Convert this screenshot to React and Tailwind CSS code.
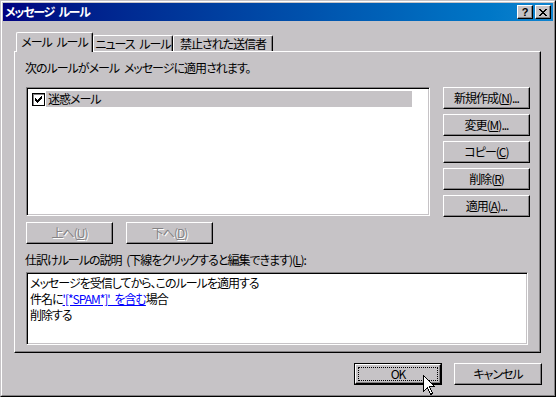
const raised =
  "flex items-center justify-center border border-t-white border-l-white border-r-black border-b-black shadow-[inset_-1px_-1px_0_#848284]";
const sunken =
  "border border-t-[#848284] border-l-[#848284] border-r-white border-b-white shadow-[inset_1px_1px_0_#000,inset_-1px_-1px_0_#c6c3c6]";

function Btn({ children, className = "", disabled }) {
  return (
    <div
      className={
        raised +
        " h-[22px] w-[87px] whitespace-nowrap " +
        (disabled ? "text-[#848284] [text-shadow:1px_1px_0_#fff] " : "") +
        className
      }
    >
      {children}
    </div>
  );
}

function Tab({ children, active, className = "" }) {
  return (
    <div
      className={
        "flex items-start justify-center whitespace-nowrap rounded-t-[2px] border-l border-t border-r border-t-white border-l-white border-r-black bg-[#c6c3c6] shadow-[inset_-1px_0_0_#848284] " +
        (active ? "relative z-10 h-[20px] mb-[-1px] pt-[2px] " : "h-[16px] pt-0 ") +
        className
      }
    >
      {children}
    </div>
  );
}

export default function App() {
  return (
    <div className="relative w-[556px] h-[397px] bg-[#c6c3c6] text-[12px] leading-[14px] tracking-[-1px] [word-spacing:3px] text-black font-['Noto_Sans_CJK_JP',sans-serif] [font-feature-settings:'palt'] border border-t-[#c6c3c6] border-l-[#c6c3c6] border-r-black border-b-black select-none overflow-hidden">
      <div className="h-full border border-t-white border-l-white border-r-[#848284] border-b-[#848284] p-[1px] flex flex-col">
        {/* title bar */}
        <div className="h-[18px] shrink-0 flex items-center bg-gradient-to-r from-[#000080] to-[#1084d0] pl-[2px] pr-[2px]">
          <div className="flex-1 text-white font-bold text-[12px] leading-[18px] tracking-[-1.3px]">メッセージ ルール</div>
          <div className={raised + " w-[16px] h-[14px] bg-[#c6c3c6]"}>
            <span className="font-['Liberation_Sans',sans-serif] font-bold text-[11px] leading-[12px] mt-[-1px] tracking-normal">?</span>
          </div>
          <div className={raised + " w-[16px] h-[14px] bg-[#c6c3c6] ml-[2px]"}>
            <svg width="8" height="7" viewBox="0 0 8 7" shapeRendering="crispEdges">
              <path d="M0 0h2v1H0zM6 0h2v1H6zM1 1h2v1H1zM5 1h2v1H5zM2 2h4v1H2zM3 3h2v1H3zM2 4h4v1H2zM1 5h2v1H1zM5 5h2v1H5zM0 6h2v1H0zM6 6h2v1H6z" fill="#000" />
            </svg>
          </div>
        </div>

        {/* tabs */}
        <div className="flex items-end h-[19px] mt-[11px] ml-[13px]">
          <Tab active className="w-[77px]">メール ルール</Tab>
          <Tab className="w-[80px] pt-[1px]">ニュース ルール</Tab>
          <Tab className="w-[100px] pt-[1px]">禁止された送信者</Tab>
        </div>

        {/* panel */}
        <div className="ml-[11px] w-[527px] h-[302px] shrink-0 border border-t-white border-l-white border-r-black border-b-black shadow-[inset_-1px_-1px_0_#848284] pl-[11px] pt-[9px] flex flex-col">
          <div className="ml-[-1px]">次のルールがメール メッセージに適用されます。</div>

          <div className="flex items-start mt-[12px]">
            <div className={sunken + " w-[404px] h-[129px] bg-white shrink-0 pl-[5px] pt-[3px]"}>
              <div className="flex items-center h-[16px]">
                <div className="w-[13px] h-[13px] border border-black bg-white shadow-[inset_1px_1px_0_#848284] flex items-center justify-center">
                  <svg width="9" height="9" viewBox="0 0 9 9" shapeRendering="crispEdges">
                    <path d="M7 1h1v3H7zM6 2h1v3H6zM5 3h1v3H5zM4 4h1v3H4zM3 5h1v3H3zM2 4h1v3H2zM1 3h1v3H1z" fill="#000" />
                  </svg>
                </div>
                <div className="ml-[1px] h-[16px] w-[366px] bg-[#c6c3c6] pl-[2px] leading-[16px]">迷惑メール</div>
              </div>
            </div>
            <div className="flex flex-col gap-[5px] ml-[13px]">
              <Btn>新規作成(<u>N</u>)...</Btn>
              <Btn>変更(<u>M</u>)...</Btn>
              <Btn>コピー(<u>C</u>)</Btn>
              <Btn>削除(<u>R</u>)</Btn>
              <Btn>適用(<u>A</u>)...</Btn>
            </div>
          </div>

          <div className="flex gap-[13px] mt-[5px]">
            <Btn disabled>上へ(<u>U</u>)</Btn>
            <Btn disabled>下へ(<u>D</u>)</Btn>
          </div>

          <div className="mt-[9px] ml-[-1px]">仕訳けルールの説明 (下線をクリックすると編集できます)(<u>L</u>):</div>

          <div className={sunken + " mt-[5px] w-[502px] h-[73px] bg-white pl-[3px] pt-[2px] leading-[16px]"}>
            <div>メッセージを受信してから、このルールを適用する</div>
            <div>
              件名に<span className="text-[#0000ff] underline">'[*SPAM*]' を含む</span>場合
            </div>
            <div>削除する</div>
          </div>
        </div>

        {/* bottom buttons */}
        <div className="flex justify-end gap-[12px] mt-[10px] pr-[11px]">
          <div className="w-[88px] h-[22px] border border-black">
            <div className={raised + " h-full w-full"}>
              <div className="w-[80px] h-[14px] border border-dotted border-black flex items-center justify-center">OK</div>
            </div>
          </div>
          <Btn className="w-[88px]">キャンセル</Btn>
        </div>
      </div>

      {/* mouse cursor */}
      <svg className="absolute left-[422px] top-[374px]" width="12" height="21" viewBox="0 0 12 21" shapeRendering="crispEdges">
        <path d="M0.5 0.5 L0.5 16.5 L4.5 12.5 L7.5 19.5 L9.5 18.5 L6.5 11.5 L11.5 11.5 Z" fill="#fff" stroke="#000" strokeWidth="1" />
      </svg>
    </div>
  );
}
